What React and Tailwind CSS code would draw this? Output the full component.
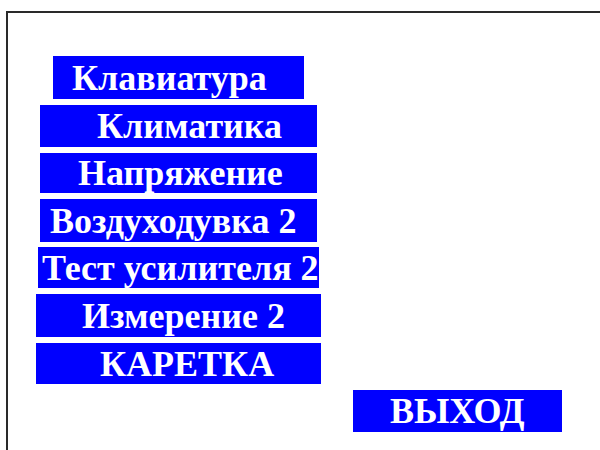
const items = [
  { label: "Клавиатура", box: "ml-[45px] mt-[43px] w-[251px] h-[43px] pl-[19px]" },
  { label: "Климатика", box: "ml-[32px] mt-[6px] w-[277px] h-[42px] pl-[57px]" },
  { label: "Напряжение", box: "ml-[32px] mt-[6px] w-[277px] h-[40px] pl-[38px]" },
  { label: "Воздуходувка 2", box: "ml-[32px] mt-[6px] w-[277px] h-[43px] pl-[10px]" },
  { label: "Тест усилителя 2", box: "ml-[30px] mt-[5px] w-[281px] h-[41px] pl-[4px]" },
  { label: "Измерение 2", box: "ml-[28px] mt-[6px] w-[285px] h-[43px] pl-[46px]" },
  { label: "КАРЕТКА", box: "ml-[28px] mt-[6px] w-[285px] h-[41px] pl-[64px]" },
];

function MenuButton({ label, box }) {
  return (
    <button
      className={`flex shrink-0 items-center overflow-hidden bg-[#0000ff] text-left text-[36px] font-bold leading-none text-white ${box}`}
    >
      <span className="whitespace-nowrap">{label}</span>
    </button>
  );
}

export default function App() {
  return (
    <div className="h-[450px] w-[600px] overflow-hidden bg-white font-['Liberation_Serif',serif]">
      <div className="ml-[6px] mt-[11px] flex h-[460px] w-[620px] flex-col border-l-2 border-t-2 border-[#2a2a2a]">
        {items.map((item) => (
          <MenuButton key={item.label} {...item} />
        ))}
        <MenuButton label="ВЫХОД" box="ml-[345px] mt-[6px] w-[209px] h-[42px] pl-[37px]" />
      </div>
    </div>
  );
}
